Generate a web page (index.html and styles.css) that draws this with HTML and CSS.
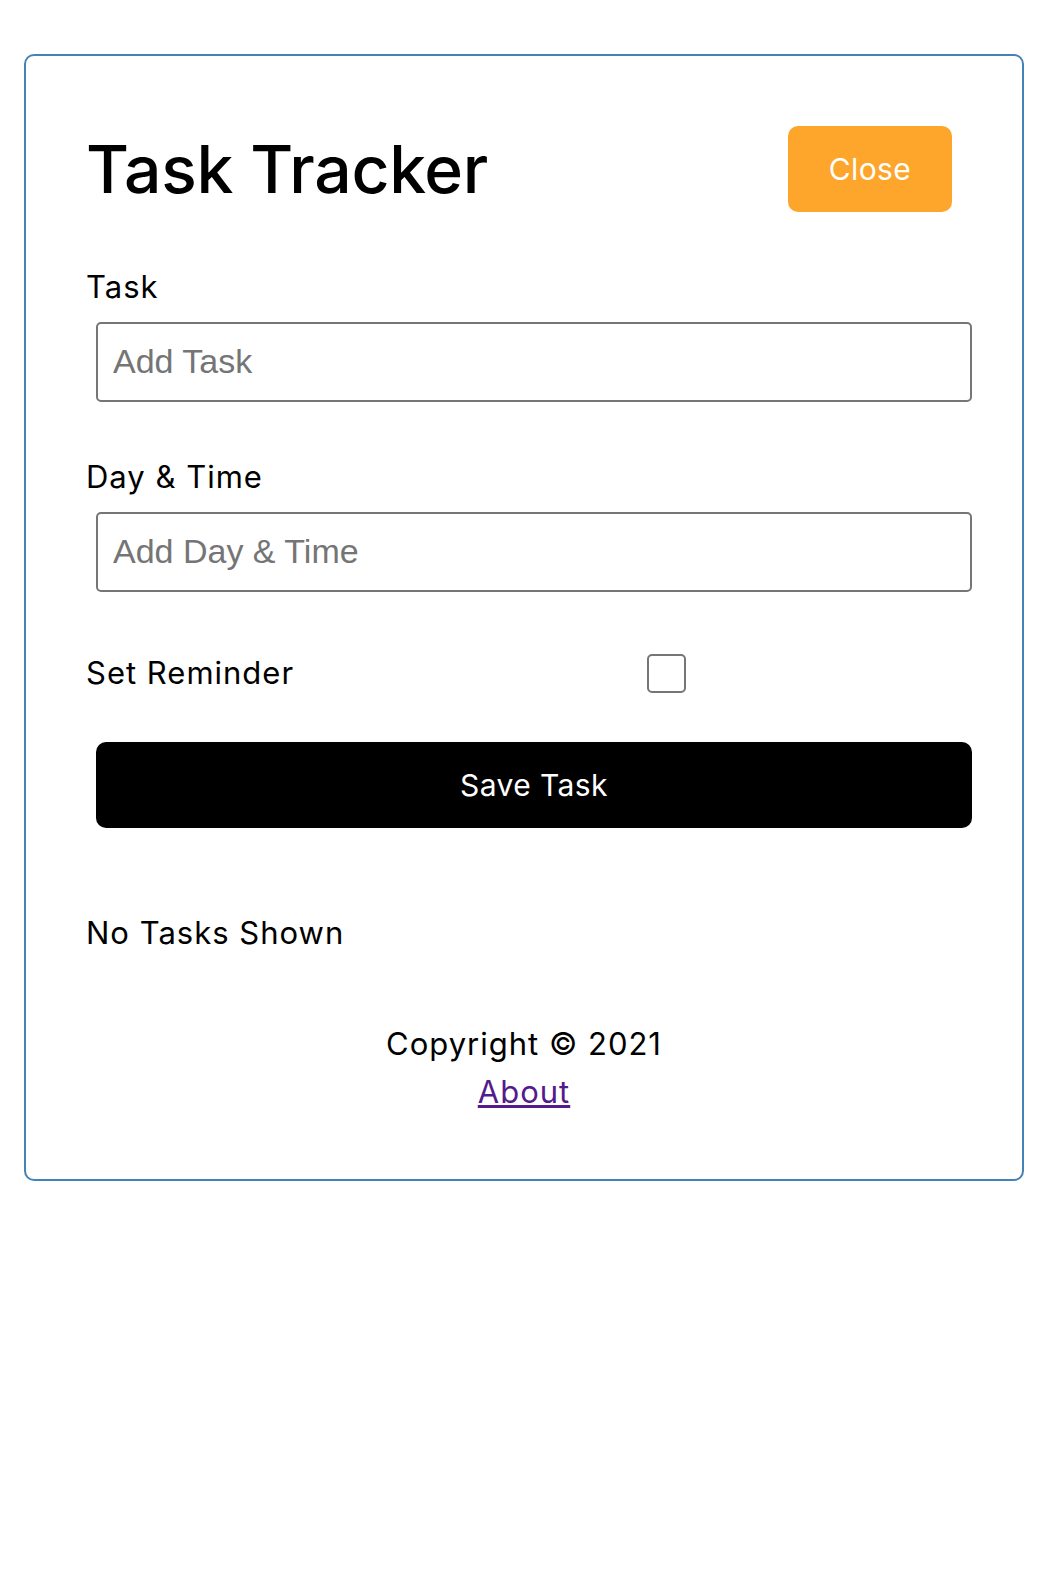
FILE: index.html
```html
<!DOCTYPE html>
<html lang="en">
<head>
<meta charset="utf-8">
<title>Task Tracker</title>
<link rel="stylesheet" href="styles.css">
</head>
<body>
<div class="container">
  <header class="header">
    <h1 class="title">Task Tracker</h1>
    <button class="btn btn-close" type="button">Close</button>
  </header>
  <form class="add-form">
    <div class="form-control">
      <label class="label" for="task">Task</label>
      <input class="input" id="task" type="text" placeholder="Add Task">
    </div>
    <div class="form-control">
      <label class="label" for="day">Day &amp; Time</label>
      <input class="input" id="day" type="text" placeholder="Add Day &amp; Time">
    </div>
    <div class="form-control form-control-check">
      <label class="label check-label" for="reminder">Set Reminder</label>
      <span class="check-wrap"><input class="check" id="reminder" type="checkbox"></span>
    </div>
    <button class="btn btn-block" type="button">Save Task</button>
  </form>
  <p class="empty">No Tasks Shown</p>
  <footer class="footer">
    <p class="copy">Copyright &copy; 2021</p>
    <a class="about" href="#about">About</a>
  </footer>
</div>
</body>
</html>
```
FILE: styles.css
```css
* {
  box-sizing: border-box;
}

body {
  margin: 0;
  background: #fff;
  color: #000;
  font-family: Inter, "Noto Sans", sans-serif;
}

.container {
  width: 1000px;
  margin: 54px auto 0;
  border: 2px solid #4682b4;
  border-radius: 10px;
  padding: 60px 60px 63px;
}

.header {
  display: flex;
  justify-content: space-between;
  align-items: center;
  margin-bottom: 41px;
}

.title {
  margin: 0;
  font-size: 66px;
  font-weight: 500;
  line-height: 96px;
  letter-spacing: -0.3px;
}

.btn {
  display: block;
  border: none;
  border-radius: 10px;
  padding: 20px 0;
  font-family: Inter, "Noto Sans", sans-serif;
  font-size: 30px;
  font-weight: 400;
  line-height: 46px;
  letter-spacing: 0.4px;
  color: #fff;
  cursor: pointer;
}

.btn-close {
  width: 164px;
  margin: 10px;
  background: #fea52b;
}

.btn-block {
  width: 100%;
  margin: 0 0 0 10px;
  background: #000;
}

.add-form {
  margin: 0 0 81px;
}

.form-control {
  margin: 0 0 51px;
}

.label {
  display: block;
  font-size: 31px;
  line-height: 48px;
  letter-spacing: 1px;
}

.input {
  display: block;
  width: 100%;
  height: 80px;
  margin: 11px 0 0 10px;
  padding: 0 15px 2px;
  border: 2px solid #767676;
  border-radius: 5px;
  background: #fff;
  color: #000;
  font-family: "Liberation Sans", Arial, sans-serif;
  font-size: 34px;
}

.input::placeholder {
  color: #757575;
}

.form-control-check {
  display: flex;
  align-items: center;
  margin: 57px 0 45px;
}

.check-label {
  flex: 1;
}

.check-wrap {
  flex: 2;
  display: flex;
  justify-content: center;
}

.check {
  appearance: none;
  -webkit-appearance: none;
  width: 39px;
  height: 39px;
  margin: 0 7px 0 0;
  border: 2px solid #767676;
  border-radius: 5px;
  background: #fff;
}

.empty {
  margin: 0;
  font-size: 31px;
  line-height: 48px;
  letter-spacing: 1px;
}

.footer {
  margin-top: 63px;
  text-align: center;
  font-size: 31px;
  line-height: 48px;
  letter-spacing: 1px;
}

.copy {
  margin: 0;
}

.about {
  color: #551a8b;
  text-decoration: underline;
}
```
